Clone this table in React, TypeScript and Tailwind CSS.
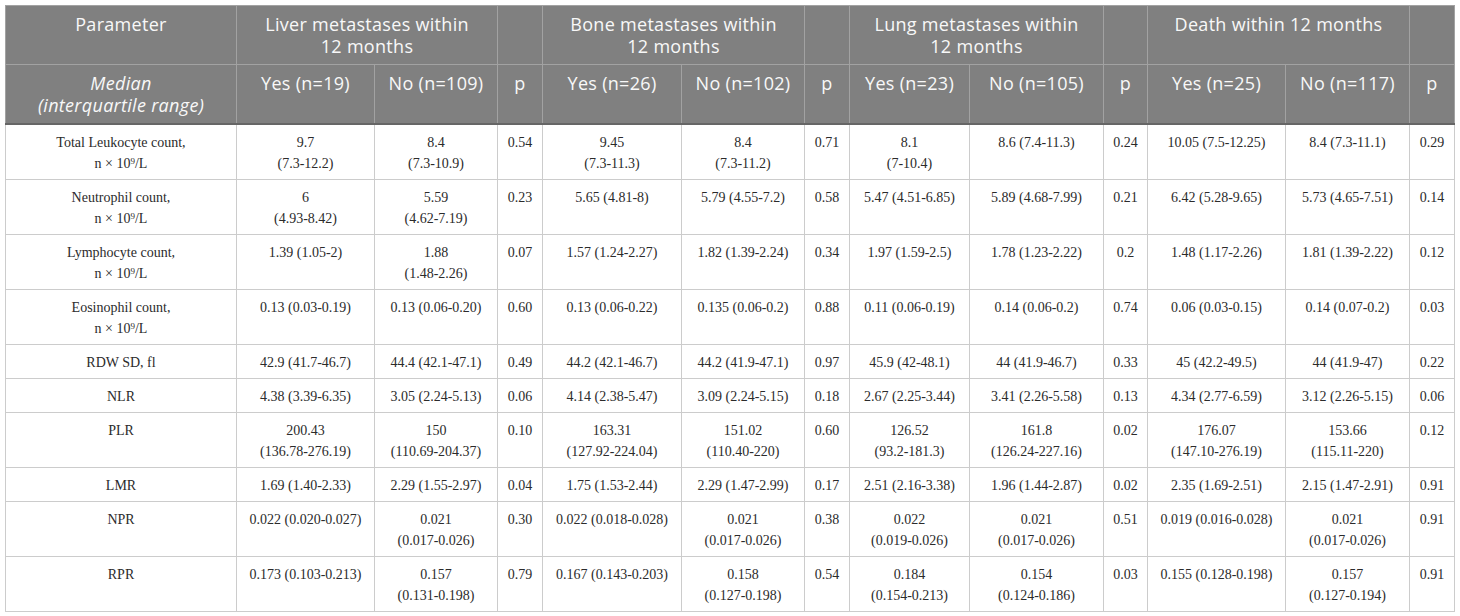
import React from "react";

type Row = { param: React.ReactNode; cells: string[] };

const unit = (
  <>
    n × 10<sup className="text-[9px]">9</sup>/L
  </>
);

const rows: Row[] = [
  {
    param: (
      <>
        Total Leukocyte count,
        <br />
        {unit}
      </>
    ),
    cells: ["9.7|(7.3-12.2)", "8.4|(7.3-10.9)", "0.54", "9.45|(7.3-11.3)", "8.4|(7.3-11.2)", "0.71", "8.1|(7-10.4)", "8.6 (7.4-11.3)", "0.24", "10.05 (7.5-12.25)", "8.4 (7.3-11.1)", "0.29"],
  },
  {
    param: (
      <>
        Neutrophil count,
        <br />
        {unit}
      </>
    ),
    cells: ["6|(4.93-8.42)", "5.59|(4.62-7.19)", "0.23", "5.65 (4.81-8)", "5.79 (4.55-7.2)", "0.58", "5.47 (4.51-6.85)", "5.89 (4.68-7.99)", "0.21", "6.42 (5.28-9.65)", "5.73 (4.65-7.51)", "0.14"],
  },
  {
    param: (
      <>
        Lymphocyte count,
        <br />
        {unit}
      </>
    ),
    cells: ["1.39 (1.05-2)", "1.88|(1.48-2.26)", "0.07", "1.57 (1.24-2.27)", "1.82 (1.39-2.24)", "0.34", "1.97 (1.59-2.5)", "1.78 (1.23-2.22)", "0.2", "1.48 (1.17-2.26)", "1.81 (1.39-2.22)", "0.12"],
  },
  {
    param: (
      <>
        Eosinophil count,
        <br />
        {unit}
      </>
    ),
    cells: ["0.13 (0.03-0.19)", "0.13 (0.06-0.20)", "0.60", "0.13 (0.06-0.22)", "0.135 (0.06-0.2)", "0.88", "0.11 (0.06-0.19)", "0.14 (0.06-0.2)", "0.74", "0.06 (0.03-0.15)", "0.14 (0.07-0.2)", "0.03"],
  },
  {
    param: "RDW SD, fl",
    cells: ["42.9 (41.7-46.7)", "44.4 (42.1-47.1)", "0.49", "44.2 (42.1-46.7)", "44.2 (41.9-47.1)", "0.97", "45.9 (42-48.1)", "44 (41.9-46.7)", "0.33", "45 (42.2-49.5)", "44 (41.9-47)", "0.22"],
  },
  {
    param: "NLR",
    cells: ["4.38 (3.39-6.35)", "3.05 (2.24-5.13)", "0.06", "4.14 (2.38-5.47)", "3.09 (2.24-5.15)", "0.18", "2.67 (2.25-3.44)", "3.41 (2.26-5.58)", "0.13", "4.34 (2.77-6.59)", "3.12 (2.26-5.15)", "0.06"],
  },
  {
    param: "PLR",
    cells: ["200.43|(136.78-276.19)", "150|(110.69-204.37)", "0.10", "163.31|(127.92-224.04)", "151.02|(110.40-220)", "0.60", "126.52|(93.2-181.3)", "161.8|(126.24-227.16)", "0.02", "176.07|(147.10-276.19)", "153.66|(115.11-220)", "0.12"],
  },
  {
    param: "LMR",
    cells: ["1.69 (1.40-2.33)", "2.29 (1.55-2.97)", "0.04", "1.75 (1.53-2.44)", "2.29 (1.47-2.99)", "0.17", "2.51 (2.16-3.38)", "1.96 (1.44-2.87)", "0.02", "2.35 (1.69-2.51)", "2.15 (1.47-2.91)", "0.91"],
  },
  {
    param: "NPR",
    cells: ["0.022 (0.020-0.027)", "0.021|(0.017-0.026)", "0.30", "0.022 (0.018-0.028)", "0.021|(0.017-0.026)", "0.38", "0.022|(0.019-0.026)", "0.021|(0.017-0.026)", "0.51", "0.019 (0.016-0.028)", "0.021|(0.017-0.026)", "0.91"],
  },
  {
    param: "RPR",
    cells: ["0.173 (0.103-0.213)", "0.157|(0.131-0.198)", "0.79", "0.167 (0.143-0.203)", "0.158|(0.127-0.198)", "0.54", "0.184|(0.154-0.213)", "0.154|(0.124-0.186)", "0.03", "0.155 (0.128-0.198)", "0.157|(0.127-0.194)", "0.91"],
  },
];

const th =
  "bg-[#808080] text-[#f8f8f8] font-['Open_Sans',sans-serif] text-[18px] leading-[22px] tracking-[0.3px] font-normal text-center align-top pt-[7px] pb-[7px] px-1 border border-[#a2a2a2]";
const th2 = th + " border-b-2 border-b-[#666666]";
const td =
  "font-['Liberation_Serif',serif] text-[14px] leading-[21px] text-[#2b2b2b] text-center align-top pt-[7px] pb-[5px] px-1 border border-[#cccccc] whitespace-nowrap";

function Cell({ v }: { v: string }) {
  const parts = v.split("|");
  return (
    <td className={td}>
      {parts.map((p, i) => (
        <React.Fragment key={i}>
          {i > 0 && <br />}
          {p}
        </React.Fragment>
      ))}
    </td>
  );
}

export default function App() {
  return (
    <div className="bg-white w-[1460px] h-[616px] pt-[5px] pl-[5px]">
      <table className="table-fixed border-collapse w-[1449px]">
        <colgroup>
          <col className="w-[231px]" />
          <col className="w-[138px]" />
          <col className="w-[123px]" />
          <col className="w-[45px]" />
          <col className="w-[139px]" />
          <col className="w-[123px]" />
          <col className="w-[45px]" />
          <col className="w-[120px]" />
          <col className="w-[134px]" />
          <col className="w-[44px]" />
          <col className="w-[138px]" />
          <col className="w-[124px]" />
          <col className="w-[45px]" />
        </colgroup>
        <thead>
          <tr>
            <th className={th}>Parameter</th>
            <th className={th} colSpan={2}>
              Liver metastases within
              <br />
              12 months
            </th>
            <th className={th}></th>
            <th className={th} colSpan={2}>
              Bone metastases within
              <br />
              12 months
            </th>
            <th className={th}></th>
            <th className={th} colSpan={2}>
              Lung metastases within
              <br />
              12 months
            </th>
            <th className={th}></th>
            <th className={th} colSpan={2}>
              Death within 12 months
            </th>
            <th className={th}></th>
          </tr>
          <tr>
            <th className={th2}>
              <i>
                Median
                <br />
                (interquartile range)
              </i>
            </th>
            <th className={th2}>Yes (n=19)</th>
            <th className={th2}>No (n=109)</th>
            <th className={th2}>p</th>
            <th className={th2}>Yes (n=26)</th>
            <th className={th2}>No (n=102)</th>
            <th className={th2}>p</th>
            <th className={th2}>Yes (n=23)</th>
            <th className={th2}>No (n=105)</th>
            <th className={th2}>p</th>
            <th className={th2}>Yes (n=25)</th>
            <th className={th2}>No (n=117)</th>
            <th className={th2}>p</th>
          </tr>
        </thead>
        <tbody>
          {rows.map((r, i) => (
            <tr key={i}>
              <td className={td}>{r.param}</td>
              {r.cells.map((c, j) => (
                <Cell key={j} v={c} />
              ))}
            </tr>
          ))}
        </tbody>
      </table>
    </div>
  );
}
